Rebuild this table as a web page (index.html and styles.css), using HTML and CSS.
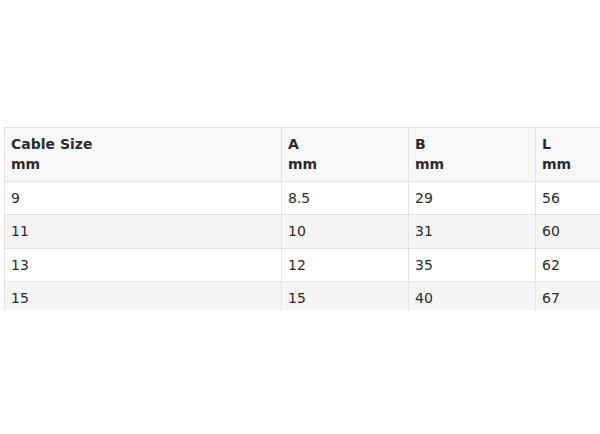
FILE: index.html
```html
<!DOCTYPE html>
<html>
<head>
<meta charset="utf-8">
<link rel="stylesheet" href="styles.css">
</head>
<body>
<div class="frame">
  <table class="spec">
    <thead>
      <tr><th class="c1">Cable Size<br>mm</th><th>A<br>mm</th><th>B<br>mm</th><th>L<br>mm</th></tr>
    </thead>
    <tbody>
      <tr><td>9</td><td>8.5</td><td>29</td><td>56</td></tr>
      <tr><td>11</td><td>10</td><td>31</td><td>60</td></tr>
      <tr><td>13</td><td>12</td><td>35</td><td>62</td></tr>
      <tr><td>15</td><td>15</td><td>40</td><td>67</td></tr>
    </tbody>
  </table>
</div>
</body>
</html>
```
FILE: styles.css
```css
html, body {
  margin: 0;
  padding: 0;
  background: #fff;
  overflow: hidden;
}
body {
  width: 600px;
  height: 434px;
}
.frame {
  margin: 127px 0 0 4px;
  height: 183px;
  width: 596px;
  overflow: hidden;
}
.spec {
  border-collapse: collapse;
  width: 659px;
  table-layout: fixed;
  font-family: "DejaVu Sans", Verdana, sans-serif;
  font-size: 14px;
  line-height: 20.4px;
  color: #2b2b2b;
}
.spec th, .spec td {
  border: 1px solid #e2e2e2;
  padding: 6px 6px;
  text-align: left;
  vertical-align: top;
}
.spec th {
  font-weight: bold;
  background: #f8f8f8;
}
.spec th.c1 { width: 264px; }
.spec tbody tr:nth-child(even) td { background: #f5f5f5; }
```
